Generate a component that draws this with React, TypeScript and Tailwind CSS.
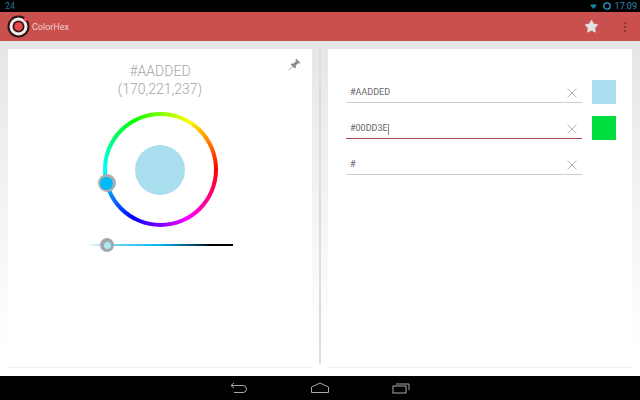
import React from 'react';
import { Star } from 'lucide-react';

const font = { fontFamily: 'Roboto, sans-serif' };

const StatusBar = () => (
  <div className="h-3 bg-black flex items-center justify-between pl-[5px] pr-[3px] text-[9px] leading-none text-[#2f8fb8]">
    <span className="text-[#24708f]">24</span>
    <div className="flex items-center">
      <svg width="7" height="5" viewBox="0 0 7 5">
        <path d="M0 1 Q3.5 -0.6 7 1 L3.5 5 Z" fill="#1f7fa6" />
      </svg>
      <svg width="8" height="8" viewBox="0 0 8 8" className="ml-[6px]">
        <circle cx="4" cy="4" r="3.2" fill="none" stroke="#2f9fd0" strokeWidth="1.3" />
      </svg>
      <span className="ml-[4px]">17:09</span>
    </div>
  </div>
);

const ActionBar = () => (
  <div className="h-[29px] bg-[#c9504c] flex items-center pl-[7px] pr-[14px]">
    <svg width="23" height="23" viewBox="0 0 23 23">
      <circle cx="11.5" cy="11.5" r="11" fill="#2a1414" />
      <circle cx="11.5" cy="11.5" r="9" fill="#f4efee" />
      <circle cx="11.5" cy="11.5" r="6" fill="#3a1616" />
      <circle cx="11.5" cy="11.5" r="4.2" fill="#e8474c" />
      <circle cx="18.5" cy="4.5" r="2" fill="#e8474c" />
    </svg>
    <span className="ml-[2px] mt-[2px] text-[9px] text-[#f3d0cd]">ColorHex</span>
    <div className="ml-auto flex items-center gap-[25px]">
      <Star size={15} className="text-[#e2e2e2]" fill="#e2e2e2" strokeWidth={1} />
      <div className="flex flex-col gap-[2px]">
        <span className="w-[2px] h-[2px] bg-[#8a3a38]" />
        <span className="w-[2px] h-[2px] bg-[#8a3a38]" />
        <span className="w-[2px] h-[2px] bg-[#8a3a38]" />
      </div>
    </div>
  </div>
);

const PinIcon = () => (
  <svg width="13" height="13" viewBox="0 0 13 13" className="absolute right-[11px] top-[9px]">
    <path d="M8 0.5 L12.5 5 L11.3 5.6 L10.2 5.2 L7.8 7.6 L7.8 9.8 L6.8 10.6 L2.6 6.4 L3.4 5.4 L5.6 5.4 L8 3 L7.5 1.8 Z" fill="#8d8d8d" />
    <path d="M4.6 8.6 L0.8 12.4" stroke="#a5a5a5" strokeWidth="1" />
  </svg>
);

const Wheel = () => (
  <div className="relative w-[115px] h-[115px] mt-[14px] flex items-center justify-center rounded-full bg-[conic-gradient(from_30deg,#ffff00,#ff0000_60deg,#ff00ff_120deg,#0000ff_180deg,#00ffff_240deg,#00ff00_300deg,#ffff00_360deg)]">
    <div className="w-[107px] h-[107px] rounded-full bg-white flex items-center justify-center">
      <div className="w-[50px] h-[50px] rounded-full bg-[#aadded]" />
    </div>
    <div className="absolute left-[-5px] top-[62px] w-[18px] h-[18px] rounded-full bg-[#a9adb2] flex items-center justify-center">
      <div className="w-[13px] h-[13px] rounded-full bg-[#00b9f8]" />
    </div>
  </div>
);

const Slider = () => (
  <div className="relative w-[146px] h-[2px] mt-[17px] bg-[linear-gradient(to_right,#ffffff,#7fd8f5_15%,#00b6f1_50%,#03415a_75%,#000000_85%)]">
    <div className="absolute left-[13px] top-[-6px] w-[14px] h-[14px] rounded-full bg-[#a3a7ab] flex items-center justify-center">
      <div className="w-[7px] h-[7px] rounded-full bg-[#aaeaf8]" />
    </div>
  </div>
);

const LeftCard = () => (
  <div className="relative w-[304px] bg-white border-b border-[#f0f0f0] flex flex-col items-center pt-[13px]">
    <div className="text-[14px] leading-[18px] font-light text-[#a5a5a5] text-center">
      <div>#AADDED</div>
      <div>(170,221,237)</div>
    </div>
    <PinIcon />
    <Wheel />
    <Slider />
  </div>
);

const ClearIcon = () => (
  <svg width="10" height="10" viewBox="0 0 10 10" fill="none" stroke="#b8b8b8" strokeWidth="1">
    <path d="M0.5 0.5 L9.5 9.5 M9.5 0.5 L0.5 9.5" />
  </svg>
);

const HexRow = ({ value, active, swatch, cursor }: { value: string; active?: boolean; swatch?: string; cursor?: boolean }) => (
  <div className="flex h-6 gap-[10px]">
    <div className={`w-[236px] flex items-center justify-between h-[23px] pt-[4px] pl-[4px] pr-[5px] border-b ${active ? 'border-[#b5484a]' : 'border-[#cccccc]'}`}>
      <span className="text-[9px] text-[#666] flex items-center">
        {value}
        {cursor && <span className="w-px h-[11px] bg-[#888]" />}
      </span>
      <ClearIcon />
    </div>
    {swatch && <div className={`w-6 h-6 ${swatch}`} />}
  </div>
);

const RightCard = () => (
  <div className="flex-1 bg-white border-b border-[#f0f0f0] flex flex-col gap-3 pl-[18px] pt-[31px]">
    <HexRow value="#AADDED" swatch="bg-[#aaddee]" />
    <HexRow value="#00DD3E" active cursor swatch="bg-[#00dd3e]" />
    <HexRow value="#" />
  </div>
);

const NavBar = () => (
  <div className="h-6 bg-black flex items-center justify-center gap-[62px]">
    <svg width="18" height="12" viewBox="0 0 18 12" fill="none" stroke="#a8a8a8" strokeWidth="1">
      <path d="M1 3.5 H13 Q16.5 3.5 16.5 7 Q16.5 10.5 13 10.5 H4" />
      <path d="M4 1 L1 3.5 L4 6" />
    </svg>
    <svg width="20" height="12" viewBox="0 0 20 12" fill="none" stroke="#a8a8a8" strokeWidth="1">
      <path d="M1.5 5 L10 1 L18.5 5 V10.5 H1.5 Z" />
    </svg>
    <svg width="18" height="12" viewBox="0 0 18 12" fill="none" stroke="#a8a8a8" strokeWidth="1">
      <rect x="1" y="4" width="13" height="7" />
      <path d="M4 2 H17 V8" />
    </svg>
  </div>
);

const App: React.FC = () => {
  return (
    <div className="w-[640px] h-[400px] flex flex-col overflow-hidden" style={font}>
      <StatusBar />
      <ActionBar />
      <div className="flex-1 flex px-2 pt-2 pb-2 bg-[linear-gradient(to_bottom,#e6e6e6,#ffffff_92%)]">
        <LeftCard />
        <div className="w-4 flex justify-center pb-[4px]">
          <div className="w-[2px] h-full bg-[#e8d8d8]" />
        </div>
        <RightCard />
      </div>
      <NavBar />
    </div>
  );
};

export default App;
